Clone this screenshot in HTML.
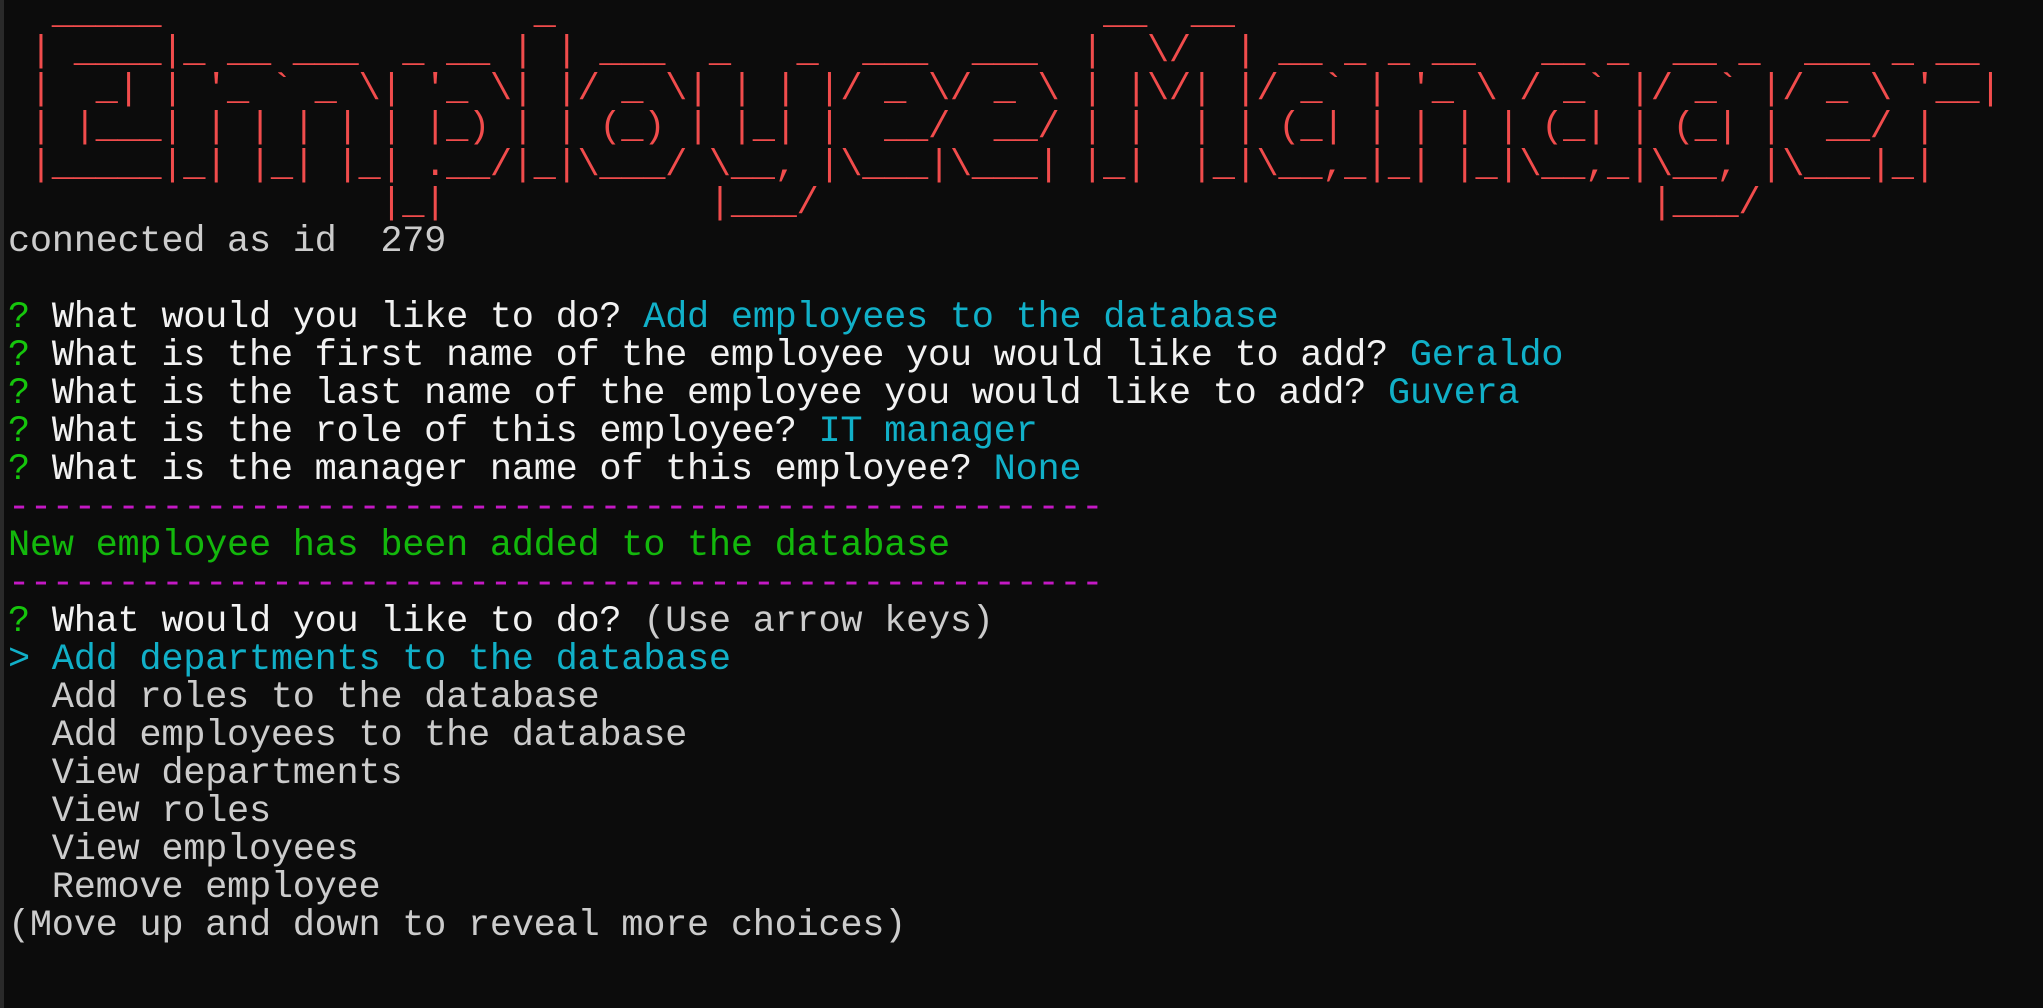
<!DOCTYPE html>
<html><head><meta charset="utf-8"><style>
html,body{margin:0;padding:0;background:#0c0c0c;width:2043px;height:1008px;overflow:hidden}
body{border-left:4px solid #2a2a2a;box-sizing:border-box}
pre{margin:0;position:absolute;left:8px;top:-5px;font-family:"Liberation Mono",monospace;font-size:37px;line-height:38px;color:#cccccc;letter-spacing:-0.3px}
.r{color:#f14c4c}.w{color:#f2f2f2}.g{color:#16c60c}.c{color:#11b0c8}.m{color:#c419c4}.gr{color:#13b80c}
</style></head><body><pre><span class="r">  _____                 _                         __  __
 | ____|_ __ ___  _ __ | | ___  _   _  ___  ___  |  \/  | __ _ _ __   __ _  __ _  ___ _ __
 |  _| | '_ ` _ \| '_ \| |/ _ \| | | |/ _ \/ _ \ | |\/| |/ _` | '_ \ / _` |/ _` |/ _ \ '__|
 | |___| | | | | | |_) | | (_) | |_| |  __/  __/ | |  | | (_| | | | | (_| | (_| |  __/ |
 |_____|_| |_| |_| .__/|_|\___/ \__, |\___|\___| |_|  |_|\__,_|_| |_|\__,_|\__, |\___|_|
                 |_|            |___/                                      |___/</span>
connected as id  279

<span class="g">?</span> <span class="w">What would you like to do?</span> <span class="c">Add employees to the database</span>
<span class="g">?</span> <span class="w">What is the first name of the employee you would like to add?</span> <span class="c">Geraldo</span>
<span class="g">?</span> <span class="w">What is the last name of the employee you would like to add?</span> <span class="c">Guvera</span>
<span class="g">?</span> <span class="w">What is the role of this employee?</span> <span class="c">IT manager</span>
<span class="g">?</span> <span class="w">What is the manager name of this employee?</span> <span class="c">None</span>
<span class="m">--------------------------------------------------</span>
<span class="gr">New employee has been added to the database</span>
<span class="m">--------------------------------------------------</span>
<span class="g">?</span> <span class="w">What would you like to do?</span> (Use arrow keys)
<span class="c">&gt; Add departments to the database</span>
  Add roles to the database
  Add employees to the database
  View departments
  View roles
  View employees
  Remove employee
(Move up and down to reveal more choices)</pre></body></html>
